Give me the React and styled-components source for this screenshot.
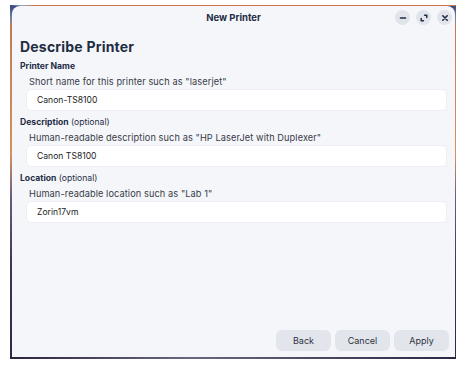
import React from "react";
import styled, { createGlobalStyle } from "styled-components";

const GlobalStyle = createGlobalStyle`
  html, body {
    margin: 0;
    background: #ffffff;
    font-family: Inter, "Noto Sans", "Liberation Sans", sans-serif;
  }
`;

const fields = [
  {
    label: "Printer Name",
    hint: 'Short name for this printer such as "laserjet"',
    value: "Canon-TS8100",
  },
  {
    label: "Description",
    optional: true,
    hint: 'Human-readable description such as "HP LaserJet with Duplexer"',
    value: "Canon TS8100",
  },
  {
    label: "Location",
    optional: true,
    hint: 'Human-readable location such as "Lab 1"',
    value: "Zorin17vm",
  },
];

const MinusIcon = () => (
  <svg width="8" height="8" viewBox="0 0 8 8">
    <path d="M1.5 4h5" stroke="#1f2d44" strokeWidth="1.6" strokeLinecap="round" />
  </svg>
);

const MaxIcon = () => (
  <svg width="8" height="8" viewBox="0 0 8 8">
    <path d="M4.6 1.2h2.2v2.2M3.4 6.8H1.2V4.6" fill="none" stroke="#1f2d44" strokeWidth="1.5" strokeLinecap="round" strokeLinejoin="round" />
  </svg>
);

const CloseIcon = () => (
  <svg width="8" height="8" viewBox="0 0 8 8">
    <path d="M1.8 1.8l4.4 4.4M6.2 1.8L1.8 6.2" stroke="#1f2d44" strokeWidth="1.6" strokeLinecap="round" />
  </svg>
);

export default function App() {
  return (
    <>
      <GlobalStyle />
      <Desktop>
        <Window>
          <TitleBar>
            <Title>New Printer</Title>
            <Controls>
              <CtrlBtn><MinusIcon /></CtrlBtn>
              <CtrlBtn><MaxIcon /></CtrlBtn>
              <CtrlBtn><CloseIcon /></CtrlBtn>
            </Controls>
          </TitleBar>
          <Content>
            <Heading>Describe Printer</Heading>
            {fields.map((f) => (
              <Field key={f.label}>
                <Label>
                  {f.label}
                  {f.optional && <Optional> (optional)</Optional>}
                </Label>
                <Hint>{f.hint}</Hint>
                <Input defaultValue={f.value} />
              </Field>
            ))}
          </Content>
          <Footer>
            <Button>Back</Button>
            <Button>Cancel</Button>
            <Button>Apply</Button>
          </Footer>
        </Window>
      </Desktop>
    </>
  );
}

const Desktop = styled.div`
  box-sizing: border-box;
  margin: 5px 0 0 10px;
  width: 446px;
  height: 354px;
  padding: 1px 1px 2px 2px;
  background:
    linear-gradient(to right, #3c4d88 0px, #9aa3c0 12px, #c8784f 24px, #c97850 100%) top / 100% 1px no-repeat,
    linear-gradient(to right, #2a2440 0px, #6b6680 40%, #2c2745 100%) bottom / 100% 2px no-repeat,
    linear-gradient(to bottom, #34467e 0px, #7c83a8 14px, #c47a52 22px, #d3925f 150px, #6a5c82 192px, #3e3559 260px, #2e2846 100%);
`;

const Window = styled.div`
  display: flex;
  flex-direction: column;
  height: 100%;
  background: #f5f6fa;
  border-radius: 8px 8px 0 0;
`;

const TitleBar = styled.div`
  position: relative;
  display: flex;
  align-items: center;
  justify-content: center;
  height: 23px;
`;

const Title = styled.div`
  font-size: 9.5px;
  font-weight: 700;
  color: #1f2d44;
`;

const Controls = styled.div`
  position: absolute;
  right: 3px;
  top: 4px;
  display: flex;
  gap: 6px;
`;

const CtrlBtn = styled.div`
  display: flex;
  align-items: center;
  justify-content: center;
  width: 15px;
  height: 15px;
  border-radius: 50%;
  background: #e1e4ea;
`;

const Content = styled.div`
  flex: 1;
  padding: 10px 8px 0 8px;
`;

const Heading = styled.div`
  font-size: 14px;
  font-weight: 700;
  letter-spacing: 0.2px;
  color: #1f2d44;
  line-height: 16px;
  margin-bottom: 5px;
`;

const Field = styled.div`
  display: flex;
  flex-direction: column;
  margin-bottom: 5px;
`;

const Label = styled.div`
  font-size: 8.6px;
  font-weight: 700;
  color: #1f2d44;
  line-height: 12px;
`;

const Optional = styled.span`
  font-weight: 400;
`;

const Hint = styled.div`
  font-size: 9.2px;
  letter-spacing: 0.1px;
  color: #353b47;
  line-height: 12px;
  margin: 4px 0 1px 9px;
`;

const Input = styled.input`
  box-sizing: border-box;
  margin-left: 6px;
  width: 421px;
  height: 22px;
  padding: 0 10px;
  border: 1px solid #eceef3;
  border-radius: 5px;
  background: #ffffff;
  font-family: inherit;
  font-size: 8.6px;
  color: #222;
  outline: none;
`;

const Footer = styled.div`
  display: flex;
  justify-content: flex-end;
  gap: 4px;
  padding: 0 6px 6px 0;
`;

const Button = styled.div`
  display: flex;
  align-items: center;
  justify-content: center;
  width: 55px;
  height: 21px;
  border-radius: 6px;
  background: #e2e5ec;
  font-size: 9px;
  color: #2e3440;
`;
